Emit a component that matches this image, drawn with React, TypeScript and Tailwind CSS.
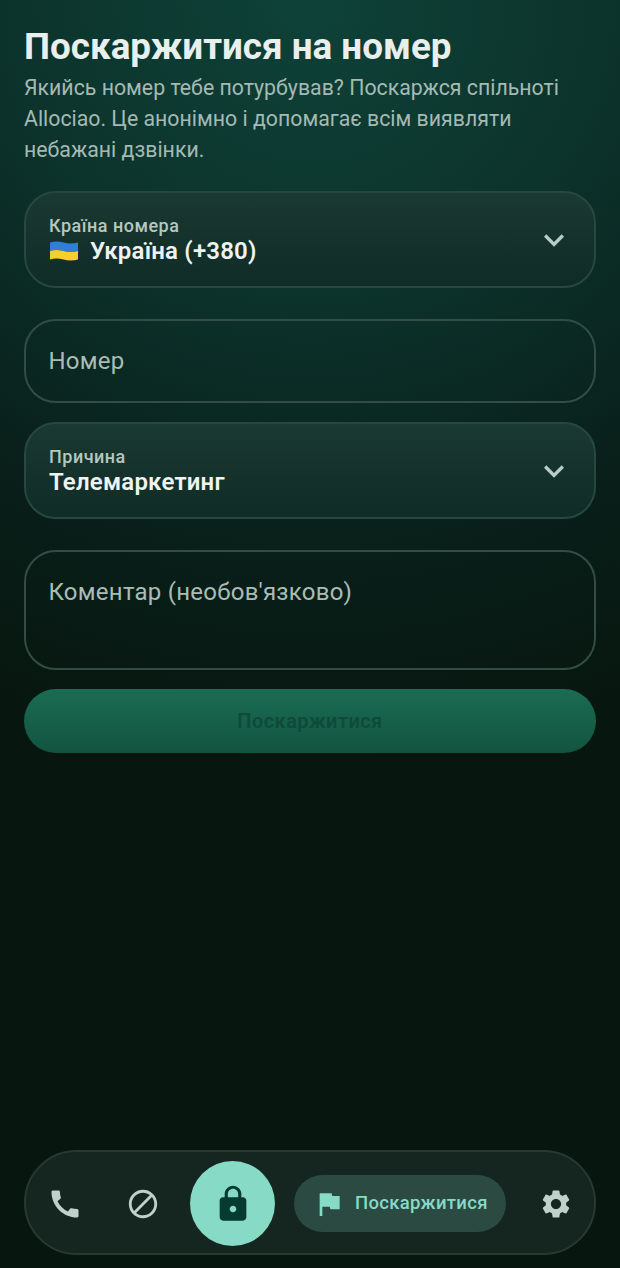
const ICONS = {
  call: 'M20.01 15.38c-1.23 0-2.42-.2-3.53-.56-.35-.12-.74-.03-1.01.24l-1.57 1.97c-2.83-1.35-5.48-3.9-6.89-6.83l1.95-1.66c.27-.28.35-.67.24-1.02-.37-1.11-.56-2.3-.56-3.53 0-.54-.45-.99-.99-.99H4.19C3.65 3 3 3.24 3 3.99 3 13.28 10.73 21 20.01 21c.71 0 .99-.63.99-1.18v-3.45c0-.54-.45-.99-.99-.99z',
  block: 'M12 2C6.48 2 2 6.48 2 12s4.48 10 10 10 10-4.48 10-10S17.52 2 12 2zM4 12c0-4.42 3.58-8 8-8 1.85 0 3.55.63 4.9 1.69L5.69 16.9C4.63 15.55 4 13.85 4 12zm8 8c-1.85 0-3.55-.63-4.9-1.69L18.31 7.1C19.37 8.45 20 10.15 20 12c0 4.42-3.58 8-8 8z',
  lock: 'M18 8h-1V6c0-2.76-2.24-5-5-5S7 3.24 7 6v2H6c-1.1 0-2 .9-2 2v10c0 1.1.9 2 2 2h12c1.1 0 2-.9 2-2V10c0-1.1-.9-2-2-2zm-6 9c-1.1 0-2-.9-2-2s.9-2 2-2 2 .9 2 2-.9 2-2 2zm3.1-9H8.9V6c0-1.71 1.39-3.1 3.1-3.1 1.71 0 3.1 1.39 3.1 3.1v2z',
  flag: 'M14.4 6L14 4H5v17h2v-7h5.6l.4 2h7V6z',
  settings: 'M19.14 12.94c.04-.3.06-.61.06-.94 0-.32-.02-.64-.07-.94l2.03-1.58c.18-.14.23-.41.12-.61l-1.92-3.32c-.12-.22-.37-.29-.59-.22l-2.39.96c-.5-.38-1.03-.7-1.62-.94l-.36-2.54c-.04-.24-.24-.41-.48-.41h-3.84c-.24 0-.43.17-.47.41l-.36 2.54c-.59.24-1.13.57-1.62.94l-2.39-.96c-.22-.08-.47 0-.59.22L2.74 8.87c-.12.21-.08.47.12.61l2.03 1.58c-.05.3-.09.63-.09.94s.02.64.07.94l-2.03 1.58c-.18.14-.23.41-.12.61l1.92 3.32c.12.22.37.29.59.22l2.39-.96c.5.38 1.03.7 1.62.94l.36 2.54c.05.24.24.41.48.41h3.84c.24 0 .44-.17.47-.41l.36-2.54c.59-.24 1.13-.56 1.62-.94l2.39.96c.22.08.47 0 .59-.22l1.92-3.32c.12-.22.07-.47-.12-.61l-2.01-1.58zM12 15.6c-1.98 0-3.6-1.62-3.6-3.6s1.62-3.6 3.6-3.6 3.6 1.62 3.6 3.6-1.62 3.6-3.6 3.6z',
  chevron: 'M16.59 8.59L12 13.17 7.41 8.59 6 10l6 6 6-6z',
};

function Icon({ d, className }: { d: string; className: string }) {
  return (
    <svg viewBox="0 0 24 24" fill="currentColor" className={className}>
      <path d={d} />
    </svg>
  );
}

function UaFlag() {
  return (
    <svg viewBox="0 0 30 24" className="h-[24px] w-[30px] shrink-0">
      <path d="M1 3.5c4.500-1.600 9-1.200 13.500 0s9.500 1.400 14.500 0V12c-5 1.400-10 1.200-14.500 0S5.500 10.400 1 12z" fill="#2f7fd6" />
      <path d="M1 12c4.500-1.600 9-1.200 13.500 0s9.500 1.400 14.500 0v8.500c-5 1.400-10 1.200-14.500 0S5.500 18.900 1 20.500z" fill="#f7cf2d" />
    </svg>
  );
}

function SelectField({ label, children }: { label: string; children: React.ReactNode }) {
  return (
    <div className="flex h-[97px] items-center justify-between rounded-[32px] border-2 border-[#264840] bg-gradient-to-b from-[#1a3931] to-[#0f2c26] pl-[23px] pr-[20px]">
      <div className="flex flex-col">
        <div className="text-[18px] leading-[22px] font-medium tracking-[0.5px] text-[#b4c8c1]">{label}</div>
        <div className="flex h-[28px] items-center gap-[11px] text-[24px] font-semibold tracking-[0.2px] text-[#eef3f1]">{children}</div>
      </div>
      <Icon d={ICONS.chevron} className="h-[40px] w-[40px] text-[#b9cdc6]" />
    </div>
  );
}

export default function App() {
  return (
    <div
      className="flex h-[1268px] w-[620px] flex-col overflow-hidden bg-[#07150f] bg-[radial-gradient(ellipse_780px_760px_at_50%_0%,#0e4238_0%,#0c332c_38%,#091f1a_72%,#07170f_100%)] px-[24px] font-['Roboto','Noto_Sans',sans-serif]"
    >
      <h1 className="mt-[25px] text-[36.800px] leading-[44px] font-bold text-[#e8efed]">Поскаржитися на номер</h1>
      <p className="mt-[3px] text-[21.300px] leading-[31px] text-[#a4bab3]">
        Якийсь номер тебе потурбував? Поскаржся спільноті Allociao. Це анонімно і допомагає всім виявляти небажані дзвінки.
      </p>

      <div className="mt-[26px]">
        <SelectField label="Країна номера">
          <UaFlag />
          <span>Україна (+380)</span>
        </SelectField>
      </div>

      <div className="mt-[31px] flex h-[84px] items-center rounded-[32px] border-2 border-[#334d46] pl-[22.500px] text-[24px] tracking-[0.25px] text-[#a9bdb6]">
        Номер
      </div>

      <div className="mt-[19px]">
        <SelectField label="Причина">Телемаркетинг</SelectField>
      </div>

      <div className="mt-[31px] h-[120px] rounded-[32px] border-2 border-[#334d46] pl-[22.500px] pt-[25px] text-[24px] leading-[30px] tracking-[0.25px] text-[#a9bdb6]">
        Коментар (необов'язково)
      </div>

      <button className="mt-[19px] flex h-[64px] items-center justify-center rounded-full bg-gradient-to-b from-[#1a6c52] to-[#135440] text-[20px] font-semibold tracking-[0.45px] text-[#0f4a3b]">
        Поскаржитися
      </button>

      <nav className="mt-auto mb-[13px] flex h-[105px] items-center rounded-full border-2 border-[#263a33] bg-[#14261f] pt-[2px]">
        <div className="flex w-[78px] justify-center">
          <Icon d={ICONS.call} className="h-[36px] w-[36px] text-[#c0d0ca]" />
        </div>
        <div className="flex w-[78px] justify-center">
          <Icon d={ICONS.block} className="h-[34px] w-[34px] text-[#c0d0ca]" />
        </div>
        <div className="ml-[8px] flex h-[85px] w-[85px] items-center justify-center rounded-full bg-[#86dac6]">
          <Icon d={ICONS.lock} className="h-[40px] w-[40px] text-[#063b32]" />
        </div>
        <div className="ml-[19px] flex h-[57px] w-[212px] items-center rounded-full bg-[#2b4a42] pl-[19px]">
          <Icon d={ICONS.flag} className="h-[32px] w-[32px] text-[#86dac6]" />
          <span className="ml-[10px] text-[18.500px] font-medium tracking-[0.3px] text-[#86dac6]">Поскаржитися</span>
        </div>
        <div className="ml-[33px]">
          <Icon d={ICONS.settings} className="h-[34px] w-[34px] text-[#c0d0ca]" />
        </div>
      </nav>
    </div>
  );
}
